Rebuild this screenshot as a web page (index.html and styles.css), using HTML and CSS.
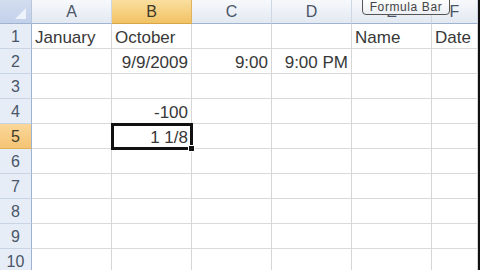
FILE: index.html
```html
<!DOCTYPE html>
<html lang="en">
<head>
  <meta charset="UTF-8">
  <title>Sheet1</title>
  <link rel="stylesheet" href="styles.css">
</head>
<body>
  <div class="sheet">
    <div class="grid">
      <div class="corner"><span class="tri"></span></div>
      <div class="col-head">A</div>
      <div class="col-head active">B</div>
      <div class="col-head">C</div>
      <div class="col-head">D</div>
      <div class="col-head">E</div>
      <div class="col-head">F</div>

      <div class="row-head">1</div>
      <div class="cell">January</div>
      <div class="cell">October</div>
      <div class="cell"></div>
      <div class="cell"></div>
      <div class="cell">Name</div>
      <div class="cell">Date</div>

      <div class="row-head">2</div>
      <div class="cell"></div>
      <div class="cell num">9/9/2009</div>
      <div class="cell num">9:00</div>
      <div class="cell num">9:00 PM</div>
      <div class="cell"></div>
      <div class="cell"></div>

      <div class="row-head">3</div>
      <div class="cell"></div><div class="cell"></div><div class="cell"></div>
      <div class="cell"></div><div class="cell"></div><div class="cell"></div>

      <div class="row-head">4</div>
      <div class="cell"></div>
      <div class="cell num">-100</div>
      <div class="cell"></div><div class="cell"></div><div class="cell"></div><div class="cell"></div>

      <div class="row-head active">5</div>
      <div class="cell"></div>
      <div class="cell num selected">1 1/8</div>
      <div class="cell"></div><div class="cell"></div><div class="cell"></div><div class="cell"></div>

      <div class="row-head">6</div>
      <div class="cell"></div><div class="cell"></div><div class="cell"></div>
      <div class="cell"></div><div class="cell"></div><div class="cell"></div>

      <div class="row-head">7</div>
      <div class="cell"></div><div class="cell"></div><div class="cell"></div>
      <div class="cell"></div><div class="cell"></div><div class="cell"></div>

      <div class="row-head">8</div>
      <div class="cell"></div><div class="cell"></div><div class="cell"></div>
      <div class="cell"></div><div class="cell"></div><div class="cell"></div>

      <div class="row-head">9</div>
      <div class="cell"></div><div class="cell"></div><div class="cell"></div>
      <div class="cell"></div><div class="cell"></div><div class="cell"></div>

      <div class="row-head">10</div>
      <div class="cell"></div><div class="cell"></div><div class="cell"></div>
      <div class="cell"></div><div class="cell"></div><div class="cell"></div>
    </div>
    <div class="edge"></div>
    <div class="tooltip">Formula Bar</div>
  </div>
</body>
</html>
```

FILE: styles.css
```css
body {
  margin: 0;
  padding: 0;
  background: #fff;
  font-family: 'Liberation Sans', Arial, sans-serif;
  overflow: hidden;
}

.sheet {
  position: relative;
  display: flex;
  width: 480px;
  height: 270px;
  overflow: hidden;
}

.grid {
  flex: 1;
  display: grid;
  grid-template-columns: 32px repeat(5, 80px) 1fr;
  grid-template-rows: 24px repeat(10, 25px);
  color: #383838;
  font-size: 17px;
}

.edge {
  width: 2px;
  background: #111;
}

.corner {
  position: relative;
  background: linear-gradient(to bottom, #d3ddef, #c2d0ea);
  border-right: 1px solid #b8c6dc;
  border-bottom: 1px solid #9eb3cf;
}

.tri {
  position: absolute;
  right: 5px;
  bottom: 4px;
  width: 0;
  height: 0;
  border-left: 11px solid transparent;
  border-bottom: 11px solid #eef2fa;
}

.col-head {
  display: flex;
  align-items: center;
  justify-content: center;
  padding-top: 1px;
  background: linear-gradient(to bottom, #f7f9fc, #e3e9f1);
  border-right: 1px solid #cdd6e2;
  border-bottom: 1px solid #9eb3cf;
  color: #4a5568;
  font-size: 16px;
}

.col-head.active {
  background: linear-gradient(to bottom, #fadf9f, #f2c264);
  border-right-color: #e0b25a;
  border-bottom-color: #d7a64a;
  color: #3e3a2a;
}

.row-head {
  display: flex;
  align-items: center;
  justify-content: center;
  padding-top: 2px;
  background: #e6edf7;
  border-right: 1px solid #9eb3cf;
  border-bottom: 1px solid #c9d4e4;
  color: #4a5568;
  font-size: 16px;
}

.row-head.active {
  background: linear-gradient(to bottom, #fad79a, #f5c474);
  border-bottom-color: #e0b25a;
  color: #3e3a2a;
}

.cell {
  display: flex;
  align-items: center;
  padding: 3px 3px 0;
  border-right: 1px solid #d6d6d6;
  border-bottom: 1px solid #dadada;
  white-space: nowrap;
  overflow: visible;
}

.cell.num {
  justify-content: flex-end;
}

.cell.selected {
  position: relative;
  outline: 3px solid #111;
  outline-offset: -2px;
}

.cell.selected::after {
  content: "";
  position: absolute;
  right: -4px;
  bottom: -4px;
  width: 5px;
  height: 5px;
  background: #111;
  border: 1px solid #fff;
}

.tooltip {
  position: absolute;
  left: 362px;
  top: -2px;
  width: 88px;
  height: 17px;
  box-sizing: border-box;
  padding-top: 1px;
  background: linear-gradient(to bottom, #ffffff, #eceff3);
  border: 1px solid #555;
  border-radius: 0 0 4px 4px;
  color: #444;
  font-size: 12px;
  line-height: 14px;
  text-align: center;
  letter-spacing: 0.6px;
}
```
